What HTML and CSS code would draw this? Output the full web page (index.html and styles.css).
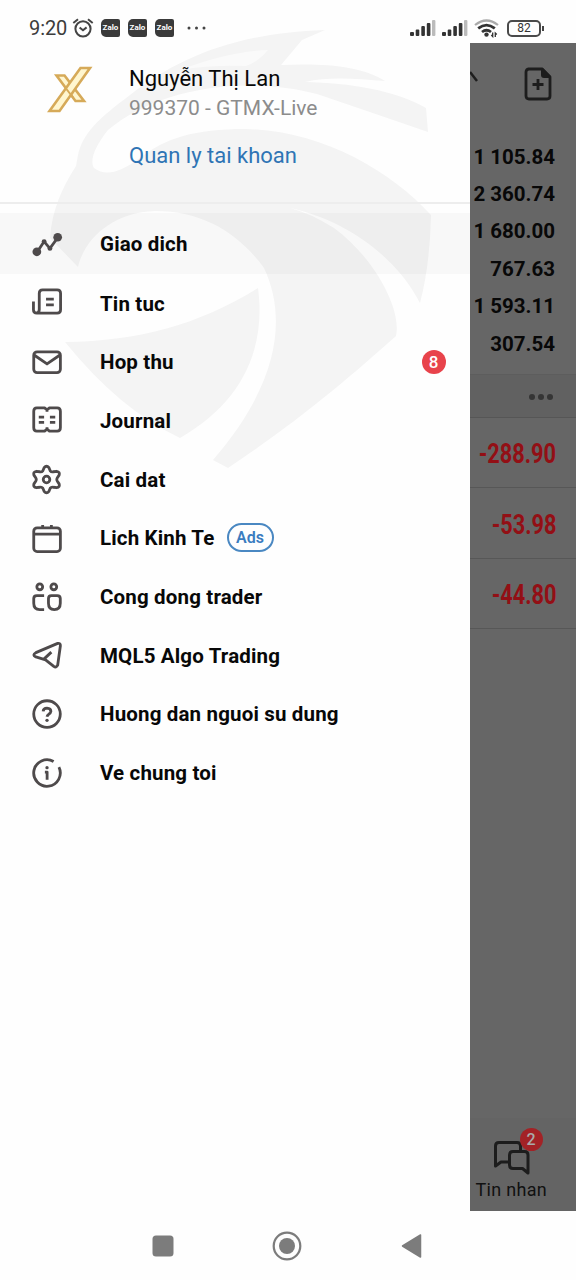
FILE: index.html
```html
<!DOCTYPE html>
<html lang="vi">
<head>
<meta charset="utf-8">
<title>Menu</title>
<link rel="stylesheet" href="styles.css">
</head>
<body>
<svg class="watermark" width="470" height="480" viewBox="0 0 470 480" aria-hidden="true">
  <path d="M325 30C235 33 178 58 130 95C98 119 83 133 78 155L76 166C62 188 52 210 50 238L78 267C84 240 112 212 155 211C205 211 240 235 264 268C286 315 282 380 213 460L228 468C300 420 350 377 396 336C402 310 375 258 334 228Q310 213 290 208C345 220 395 255 420 303Q430 265 431 215C390 170 320 130 245 129C195 129 165 138 140 158C118 174 105 176 94 168C89 160 96 145 108 130C155 90 240 74 317 94Q370 112 428 132L426 108C395 90 350 83 305 82C330 76 358 79 385 81C362 66 325 63 281 65L302 40Z"/>
  <path d="M65 342C140 341 200 324 258 288C266 348 243 402 180 438Q120 410 65 342Z"/>
  <path class="gap" d="M180 70Q230 51 268 50Q258 62 246 66Q210 65 180 70Z"/>
</svg>

<header class="status">
  <span class="clock">9:20</span>
  <svg class="alarm" width="22" height="20" viewBox="0 0 22 20"><g fill="none" stroke="#444" stroke-width="2"><circle cx="11" cy="10.8" r="7.6"/><path d="M1.3 5L6 1.3M20.7 5L16 1.3" /><path d="M7.6 9.4L11 12.2L14.6 9.4"/></g></svg>
  <span class="zalo">Zalo</span>
  <span class="zalo">Zalo</span>
  <span class="zalo">Zalo</span>
  <svg class="more" width="20" height="4" viewBox="0 0 20 4"><g fill="#444"><circle cx="2" cy="2" r="1.5"/><circle cx="9.5" cy="2" r="1.5"/><circle cx="17" cy="2" r="1.5"/></g></svg>
  <span class="spacer"></span>
  <svg width="26" height="16" viewBox="0 0 26 16"><g fill="#333"><rect y="12" width="4" height="4" rx="1"/><rect x="5.7" y="9.5" width="3.6" height="6.5" rx="1"/><rect x="11.3" y="6" width="3.6" height="10" rx="1"/><rect x="16.8" y="3" width="3.6" height="13" rx="1"/><rect x="22" width="3.4" height="16" rx="1" fill="#bbb"/></g></svg>
  <svg class="signal2" width="26" height="16" viewBox="0 0 26 16"><g fill="#333"><rect y="12" width="4" height="4" rx="1"/><rect x="5.7" y="9.5" width="3.6" height="6.5" rx="1"/><rect x="11.3" y="6" width="3.6" height="10" rx="1"/><rect x="16.8" y="3" width="3.6" height="13" rx="1"/><rect x="22" width="3.4" height="16" rx="1" fill="#bbb"/></g></svg>
  <svg class="wifi" width="26" height="19" viewBox="0 0 26 19"><g fill="none" stroke="#333" stroke-width="2.8"><path stroke="#aaa" stroke-width="2.2" d="M1 6Q12.5-3 24 6"/><path d="M4.2 9.4Q12.5 2.8 20.8 9.4"/><path d="M8 13Q12.5 9.4 17 13"/></g><circle cx="12.5" cy="15.6" r="2.2" fill="#333"/><path d="M18.7 13.5V17.5L17.3 16M21.3 18V14L22.8 15.5" fill="none" stroke="#333" stroke-width="1.3"/></svg>
  <span class="battery">82</span><span class="battery-tip"></span>
</header>

<main class="screen">
  <section class="drawer">
    <div class="account">
      <svg class="logo" width="46" height="48" viewBox="0 0 46 48"><g fill="#fff6cf" stroke="#d6aa59" stroke-width="2.600"><path d="M9.500 10.500H17.500L37 36H28.500Z"/><path d="M33.500 3H43L12.500 46H2.500Z"/><path d="M19 23.500L26 32.500" stroke-width="2"/></g></svg>
      <div class="who">
        <div class="name">Nguyễn Thị Lan</div>
        <div class="login">999370 - GTMX-Live</div>
        <div class="manage">Quan ly tai khoan</div>
      </div>
    </div>
    <nav class="menu">
      <div class="item active"><svg class="icon" viewBox="0 0 32 32"><path d="M5.500 23.500L12.500 13L18.500 20L26.500 9" fill="none"/><g class="solid"><circle cx="5" cy="23.500" r="4.500"/><circle cx="26.500" cy="8.500" r="4.500"/><circle cx="12.500" cy="13" r="2.500"/><circle cx="18.500" cy="20" r="2.500"/></g></svg><span>Giao dich</span></div>
      <div class="item"><svg class="icon up" viewBox="0 0 32 32"><path d="M7.500 25V7.500Q7.500 4 11 4H26Q29.500 4 29.500 7.500V24.500Q29.500 28 26 28H5Q1.500 28 1.500 24.500V16M7.500 24Q7.500 28 4.500 28M14.500 13.500H22.500M14.500 19.500H22.500"/></svg><span>Tin tuc</span></div>
      <div class="item"><svg class="icon" viewBox="0 0 32 32"><rect x="1.800" y="5" width="27.500" height="21.500" rx="3.500"/><path d="M2.500 8.500L15.500 17.500L28.500 8.500"/></svg><span>Hop thu</span><b class="badge">8</b></div>
      <div class="item"><svg class="icon up" viewBox="0 0 32 32"><path d="M15.500 6L13 4H5Q1.800 4 1.800 7.500V24.500Q1.800 28 5 28H13L15.500 26L18 28H26Q29.300 28 29.300 24.500V7.500Q29.300 4 26 4H18L15.500 6V8M15.500 26V24M7 13.500H12.500M7 19H12.500M18.500 13.500H24M18.500 19H24"/></svg><span>Journal</span></div>
      <div class="item"><svg class="icon" viewBox="0 0 32 32"><path d="M12.500 3.800Q15 .8 17.500 3.800L18.800 7Q20 8.500 22 8L25.500 7.500Q29 8 28 11.500L26 14.500Q25.200 16 26 17.500L28 20.500Q29 24 25.500 24.500L22 24Q20 23.500 18.800 25L17.500 28.200Q15 31.200 12.500 28.200L11.200 25Q10 23.500 8 24L4.500 24.500Q1 24 2 20.500L4 17.500Q4.800 16 4 14.500L2 11.500Q1 8 4.500 7.500L8 8Q10 8.500 11.200 7Z"/><circle cx="15" cy="16" r="3.400"/></svg><span>Cai dat</span></div>
      <div class="item"><svg class="icon" viewBox="0 0 32 32"><rect x="1.800" y="5" width="27.500" height="24.500" rx="3.500"/><path d="M2 11.500H29M11 2V5M20 2V5"/></svg><span>Lich Kinh Te</span><em class="ads">Ads</em></div>
      <div class="item"><svg class="icon" viewBox="0 0 32 32"><circle cx="8" cy="5" r="3"/><circle cx="22.500" cy="5" r="3"/><path d="M12.500 14H5Q1.800 14 1.800 17V22Q1.800 28.500 8 28.500H12.500M20 14H26Q29.200 14 29.200 17V22Q29.200 28.500 23 28.500Q17 28.500 17 22V17Q17 14 20 14Z"/></svg><span>Cong dong trader</span></div>
      <div class="item"><svg class="icon" viewBox="0 0 32 32"><path d="M4 13L26.500 3.500Q29.500 3 29.300 6L26.500 26Q25 29 22.500 27.300L14 20.500L4 17.500Q-.2 15.500 4 13ZM12.500 19.500L20 12.500"/></svg><span>MQL5 Algo Trading</span></div>
      <div class="item"><svg class="icon" viewBox="0 0 32 32"><circle cx="15.500" cy="15.500" r="13.700"/><path d="M11.500 12.800Q11.700 9.500 15.500 9.500Q19.500 9.700 19.500 12.800Q19.300 14.500 17.200 15.800Q15.700 16.800 15.500 18.300"/><circle class="solid" cx="15.500" cy="22" r="1.700"/></svg><span>Huong dan nguoi su dung</span></div>
      <div class="item"><svg class="icon" viewBox="0 0 32 32"><path d="M27.800 9.500A13.700 13.700 0 1 1 22.300 3.600"/><path d="M13.300 14.500H15.600V22.500"/><circle class="solid" cx="15.500" cy="10" r="1.700"/></svg><span>Ve chung toi</span></div>
    </nav>
  </section>

  <aside class="behind">
    <div class="toolbar">
      <svg class="arrow" width="9" height="14" viewBox="0 0 9 14"><path d="M0 1L7 10" fill="none" stroke="#1d1d1d" stroke-width="2.500"/></svg>
      <svg width="28" height="34" viewBox="0 0 28 34"><path d="M4 2H18L26 10V29Q26 32 23 32H5Q2 32 2 29V5Q2 2 5 2Z" fill="none" stroke="#1d1d1d" stroke-width="2.800"/><path d="M17 1V8Q17 11 20 11H27V9L19 1Z" fill="#1d1d1d"/><path d="M14 12V23M8.500 17.500H19.500" stroke="#1d1d1d" stroke-width="2.800"/></svg>
    </div>
    <div class="figures">
      <div>1 105.84</div><div>2 360.74</div><div>1 680.00</div><div>767.63</div><div>1 593.11</div><div>307.54</div>
    </div>
    <div class="group"><i></i><i></i><i></i></div>
    <div class="deal"><span>-288.90</span></div>
    <div class="deal"><span>-53.98</span></div>
    <div class="deal"><span>-44.80</span></div>
    <div class="tab">
      <div class="chat">
        <svg width="38" height="36" viewBox="0 0 38 36"><g fill="none" stroke="#1d1d1d" stroke-width="3" stroke-linejoin="round"><path d="M16 22H8L2.500 26V6Q2.500 2.500 6 2.500H24Q27.500 2.500 27.500 6V11"/><path d="M20 11.500H31.500Q35 11.500 35 15V33L29.500 28.500H20Q16.500 28.500 16.500 25V15Q16.500 11.500 20 11.500Z"/></g></svg>
        <b class="count">2</b>
      </div>
      <span>Tin nhan</span>
    </div>
  </aside>
</main>

<footer class="keys">
  <svg width="22" height="22" viewBox="0 0 22 22"><rect x=".5" y=".5" width="21" height="21" rx="3.500" fill="#7c7c7c"/></svg>
  <svg width="30" height="30" viewBox="0 0 30 30"><circle cx="15" cy="15" r="13.300" fill="none" stroke="#7c7c7c" stroke-width="2.200"/><circle cx="15" cy="15" r="8" fill="#7c7c7c"/></svg>
  <svg width="21" height="26" viewBox="0 0 21 26"><path d="M1.500 13L19.500 2V24Z" fill="#7c7c7c" stroke="#7c7c7c" stroke-width="1.500" stroke-linejoin="round"/></svg>
</footer>
</body>
</html>
```
FILE: styles.css
```css
* { box-sizing: border-box; }
body {
  margin: 0;
  width: 576px;
  height: 1280px;
  overflow: hidden;
  display: flex;
  flex-direction: column;
  position: relative;
  background: #fefefe;
  color: #080808;
  font-family: Roboto, "Noto Sans", sans-serif;
}
svg { display: block; flex: none; }
.watermark { position: absolute; left: 0; top: 0; z-index: -1; fill: #f4f4f4; }
.watermark .gap { fill: #fafafa; }

.status {
  height: 43px;
  flex: none;
  display: flex;
  align-items: center;
  padding: 13px 33px 0 29px;
}
.clock { width: 43px; font-size: 20px; letter-spacing: -0.1px; color: #3c3c3c; }
.alarm { margin-right: 7px; }
.zalo {
  width: 19px;
  height: 18px;
  margin-right: 8px;
  border-radius: 5px 2px 2px 5px;
  background: #3a3a3a;
  color: #fff;
  font-size: 8px;
  font-weight: 700;
  line-height: 18px;
  text-align: center;
}
.more { margin-left: 5px; }
.spacer { flex: 1; }
.signal2 { margin-left: 6px; }
.wifi { margin-left: 6px; }
.battery {
  width: 34px;
  height: 17px;
  margin-left: 7px;
  border: 2px solid #4a4a4a;
  border-radius: 5px;
  color: #333;
  font-size: 12px;
  line-height: 13px;
  text-align: center;
}
.battery-tip { width: 2px; height: 5px; margin-left: 1px; margin-right: -1px; background: #444; }

.screen { height: 1168px; flex: none; display: flex; }
.drawer { width: 469.500px; flex: none; }
.account {
  height: 161px;
  padding: 22px 0 0 47px;
  display: flex;
  gap: 36px;
  border-bottom: 2px solid #ededed;
}
.who { white-space: nowrap; }
.name { font-size: 22px; line-height: 28px; }
.login { margin-top: 1px; font-size: 21px; line-height: 28px; color: #8c8c8c; }
.manage { margin-top: 20px; font-size: 22px; line-height: 28px; color: #2f74b5; }

.menu { padding-top: 9px; }
.item {
  height: 58.670px;
  display: flex;
  align-items: center;
  padding: 1px 24px 0 32px;
  font-size: 20.500px;
  font-weight: 700;
  letter-spacing: 0.160px;
  white-space: nowrap;
}
.item.active { height: 61px; background: rgba(0, 0, 0, 0.025); }
.icon {
  width: 31px;
  height: 31px;
  margin-right: 37px;
  fill: none;
  stroke: #4e4a4b;
  stroke-width: 2.900;
  stroke-linejoin: round;
}
.icon.up { margin-top: -4px; }
.icon .solid, .icon.solid { fill: #4e4a4b; stroke: none; }
.badge {
  width: 24px;
  height: 24px;
  margin-left: auto;
  margin-top: -1px;
  border-radius: 50%;
  background: #e8434b;
  color: #fff;
  font-size: 17px;
  font-weight: 500;
  letter-spacing: 0;
  line-height: 25px;
  text-align: center;
}
.ads {
  width: 47px;
  height: 29px;
  margin-left: 12px;
  margin-top: -1px;
  border: 2px solid #4a88c2;
  border-radius: 15px;
  color: #3a7cc0;
  font-size: 16px;
  font-style: normal;
  font-weight: 600;
  letter-spacing: 0;
  line-height: 26px;
  text-align: center;
}

.behind {
  flex: 1;
  min-width: 0;
  display: flex;
  flex-direction: column;
  background: #666;
}
.toolbar { height: 95px; flex: none; display: flex; justify-content: space-between; padding: 24px 24px 0 0; }
.arrow { margin-top: 4px; }
.figures {
  height: 236px;
  flex: none;
  padding: 0.600px 21px 0 0;
  font-size: 20.500px;
  font-weight: 700;
  line-height: 37.400px;
  text-align: right;
  white-space: nowrap;
}
.group {
  height: 44px;
  flex: none;
  display: flex;
  justify-content: flex-end;
  align-items: center;
  gap: 3px;
  padding: 2px 23px 0 0;
  background: #616161;
  border-top: 1px solid #5d5d5d;
  border-bottom: 1px solid #565656;
}
.group i { width: 6px; height: 6px; border-radius: 50%; background: #353535; }
.deal {
  height: 70.400px;
  flex: none;
  display: flex;
  align-items: center;
  justify-content: flex-end;
  padding: 3px 20px 0 0;
  border-bottom: 1px solid #575757;
  color: #930f15;
  font-size: 27px;
  font-weight: 700;
}
.deal span { transform: scaleX(0.805); transform-origin: right; }
.tab {
  margin-top: auto;
  height: 93px;
  flex: none;
  padding: 22px 0 0 6px;
  background: #646464;
  color: #111;
  font-size: 18px;
  letter-spacing: 0.300px;
  line-height: 24px;
  white-space: nowrap;
}
.chat { position: relative; width: 38px; height: 38px; margin-left: 17px; }
.count {
  position: absolute;
  left: 27px;
  top: -12px;
  width: 23px;
  height: 23px;
  border-radius: 50%;
  background: #a32226;
  color: #aaa;
  font-size: 16px;
  font-weight: 500;
  letter-spacing: 0;
  line-height: 24px;
  text-align: center;
}

.keys {
  flex: 1;
  display: flex;
  align-items: center;
  padding-left: 152px;
}
.keys svg:nth-child(2) { margin-left: 98px; }
.keys svg:nth-child(3) { margin-left: 99px; }
```
